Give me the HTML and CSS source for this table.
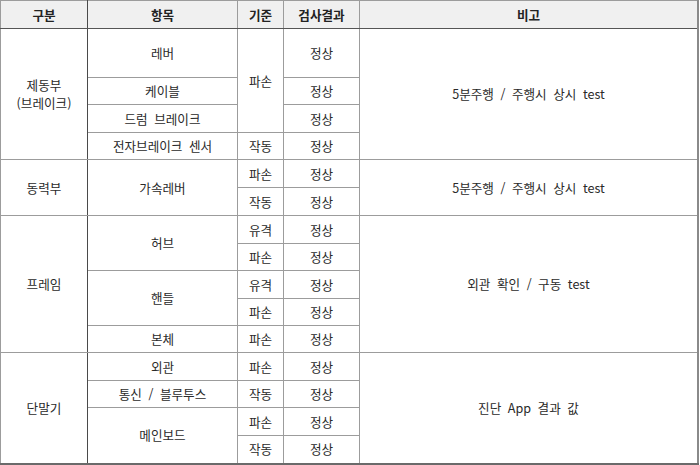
FILE: index.html
```html
<!DOCTYPE html>
<html lang="ko">
<head>
<meta charset="utf-8">
<link rel="stylesheet" href="styles.css">
</head>
<body>
<table class="sheet">
  <colgroup>
    <col class="c1"><col class="c2"><col class="c3"><col class="c4"><col class="c5">
  </colgroup>
  <thead>
    <tr class="head">
      <th>구분</th><th class="dl">항목</th><th>기준</th><th>검사결과</th><th>비고</th>
    </tr>
  </thead>
  <tbody>
    <tr class="h49 grp">
      <td rowspan="4" class="dr">제동부<br>(브레이크)</td>
      <td>레버</td>
      <td rowspan="3">파손</td>
      <td>정상</td>
      <td rowspan="4" class="note">5분주행 / 주행시 상시 test</td>
    </tr>
    <tr class="h27"><td>케이블</td><td>정상</td></tr>
    <tr class="h28"><td class="wide">드럼 브레이크</td><td>정상</td></tr>
    <tr class="h27"><td class="wide">전자브레이크 센서</td><td>작동</td><td>정상</td></tr>

    <tr class="h28 grp">
      <td rowspan="2" class="dr">동력부</td>
      <td rowspan="2">가속레버</td>
      <td>파손</td><td class="res">정상</td>
      <td rowspan="2" class="note">5분주행 / 주행시 상시 test</td>
    </tr>
    <tr class="h28"><td>작동</td><td class="res">정상</td></tr>

    <tr class="h28 grp">
      <td rowspan="5" class="dr">프레임</td>
      <td rowspan="2">허브</td>
      <td>유격</td><td class="res">정상</td>
      <td rowspan="5" class="note">외관 확인 / 구동 test</td>
    </tr>
    <tr class="h27"><td>파손</td><td class="res">정상</td></tr>
    <tr class="h28 dark"><td rowspan="2">핸들</td><td>유격</td><td class="res">정상</td></tr>
    <tr class="h27"><td>파손</td><td class="res">정상</td></tr>
    <tr class="h27"><td>본체</td><td>파손</td><td class="res">정상</td></tr>

    <tr class="h28 grp">
      <td rowspan="4" class="dr">단말기</td>
      <td>외관</td>
      <td>파손</td><td class="res">정상</td>
      <td rowspan="4" class="note">진단 App 결과 값</td>
    </tr>
    <tr class="h27"><td class="wide">통신 / 블루투스</td><td>작동</td><td class="res">정상</td></tr>
    <tr class="h28"><td rowspan="2">메인보드</td><td>파손</td><td class="res">정상</td></tr>
    <tr class="h28"><td>작동</td><td class="res">정상</td></tr>
  </tbody>
</table>
</body>
</html>
```

FILE: styles.css
```css
html, body {
  margin: 0;
  padding: 0;
  background: #ffffff;
}

body {
  font-family: "Noto Sans CJK KR", "Noto Sans", sans-serif;
  font-size: 12.6px;
  color: #2a2a2a;
}

.sheet {
  border-collapse: collapse;
  table-layout: fixed;
  width: 699px;
  border-top: 1px solid #9a9a9a;
  border-left: 1px solid #d8d8d8;
  border-right: 2px solid #8a8a8a;
  border-bottom: 2px solid #6a6a6a;
}

.c1 { width: 87px; }
.c2 { width: 150px; }
.c3 { width: 46px; }
.c4 { width: 76px; }
.c5 { width: auto; }

.sheet th,
.sheet td {
  border: 1px solid #9c9c9c;
  text-align: center;
  vertical-align: middle;
  padding: 0;
  line-height: 18px;
  white-space: nowrap;
}

.sheet th {
  background: #f0f0f0;
  font-weight: bold;
  color: #222;
  border-bottom: 1px solid #555;
}

.head { height: 28px; }
.h49 { height: 49px; }
.h28 { height: 28px; }
.h27 { height: 27px; }

.sheet td.dr,
.sheet th:first-child {
  border-right: 1px solid #4a4a4a;
}

.grp td {
  border-top: 1px solid #8a8a8a;
}

.dark td {
  border-top: 1px solid #3a3a3a;
}

.wide {
  word-spacing: 3px;
}

.note {
  word-spacing: 3px;
}

.res {
  padding-left: 2px;
}
```
